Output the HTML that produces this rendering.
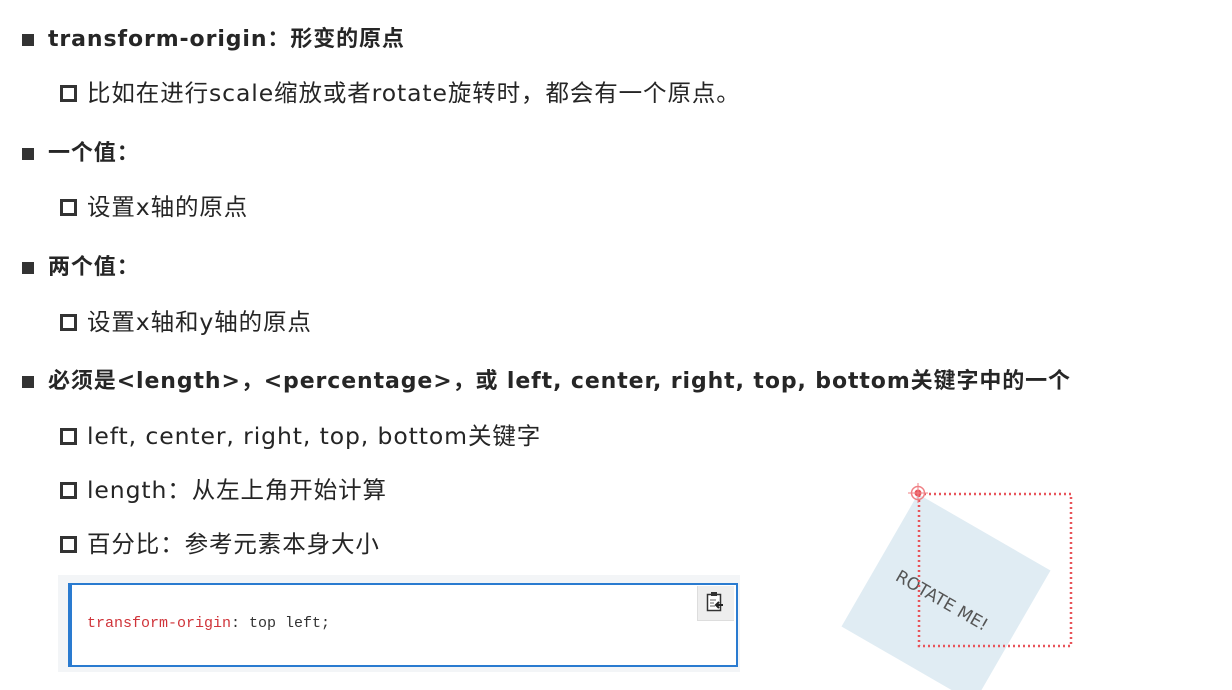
<!DOCTYPE html>
<html><head><meta charset="utf-8"><style>
body{margin:0;width:1232px;height:690px;background:#fff;position:relative;overflow:hidden;font-family:"DejaVu Sans","Noto Sans CJK SC",sans-serif;color:#252525}
.l{position:absolute;line-height:30px;white-space:nowrap}
.l1{left:48px;font-weight:bold;font-size:22px;letter-spacing:0.9px;color:#262626}
.l1:before{content:"";position:absolute;left:-26px;top:9px;width:12px;height:12px;background:#333}
.l2{left:87px;font-size:23.5px;letter-spacing:0.9px}
.l2:before{content:"";position:absolute;left:-27px;top:7px;width:11px;height:11px;border:3px solid #333}
</style></head><body>
<div class="l l1" style="top:25px">transform-origin：形变的原点</div>
<div class="l l2" style="top:78px">比如在进行scale缩放或者rotate旋转时，都会有一个原点。</div>
<div class="l l1" style="top:139px">一个值：</div>
<div class="l l2" style="top:192px">设置x轴的原点</div>
<div class="l l1" style="top:253px">两个值：</div>
<div class="l l2" style="top:307px">设置x轴和y轴的原点</div>
<div class="l l1" style="top:367px">必须是&lt;length&gt;，&lt;percentage&gt;，或 left, center, right, top, bottom关键字中的一个</div>
<div class="l l2" style="top:421px">left, center, right, top, bottom关键字</div>
<div class="l l2" style="top:475px">length：从左上角开始计算</div>
<div class="l l2" style="top:529px">百分比：参考元素本身大小</div>

<div style="position:absolute;left:58px;top:575px;width:682px;height:97px;background:#f3f5f7"></div>
<div style="position:absolute;left:68px;top:583px;width:664px;height:80px;background:#fff;border:2px solid #2a7bd0;border-left-width:4px"></div>
<div style="position:absolute;left:697px;top:586px;width:36px;height:34px;background:#eee;border-left:1px solid #ddd;border-bottom:1px solid #ddd"></div>
<svg style="position:absolute;left:706px;top:591px" width="18" height="22" viewBox="0 0 18 22"><rect x="1.5" y="3.5" width="13" height="16" fill="#fff" stroke="#333" stroke-width="1.5"/><rect x="5" y="1" width="6" height="4" fill="#333"/><path d="M4 9h6M4 12h4M4 15h5" stroke="#666"/><path d="M17 14h-7M13 11l-3 3 3 3" stroke="#222" stroke-width="2" fill="none"/></svg>
<div style="position:absolute;left:87px;top:615px;font:15px 'Liberation Mono',monospace;color:#333"><span style="color:#d0343a">transform-origin</span>: top left;</div>

<svg style="position:absolute;left:820px;top:460px" width="280" height="230">
<g transform="translate(98,34) rotate(30)">
<rect x="0" y="0" width="153" height="153" fill="#e0ecf3"/>
<text x="74" y="86" text-anchor="middle" font-family="DejaVu Sans,sans-serif" font-size="17" fill="#555">ROTATE ME!</text>
</g>
<rect x="99" y="34" width="152" height="152" fill="none" stroke="#e8545a" stroke-width="2.5" stroke-dasharray="2 3"/>
<circle cx="98" cy="33" r="6.5" fill="none" stroke="#f08085" stroke-width="1.5"/>
<circle cx="98" cy="33" r="3.5" fill="#e8545a"/>
<path d="M88 33h20M98 23v20" stroke="#f08085" stroke-width="1"/>
</svg>
</body></html>
